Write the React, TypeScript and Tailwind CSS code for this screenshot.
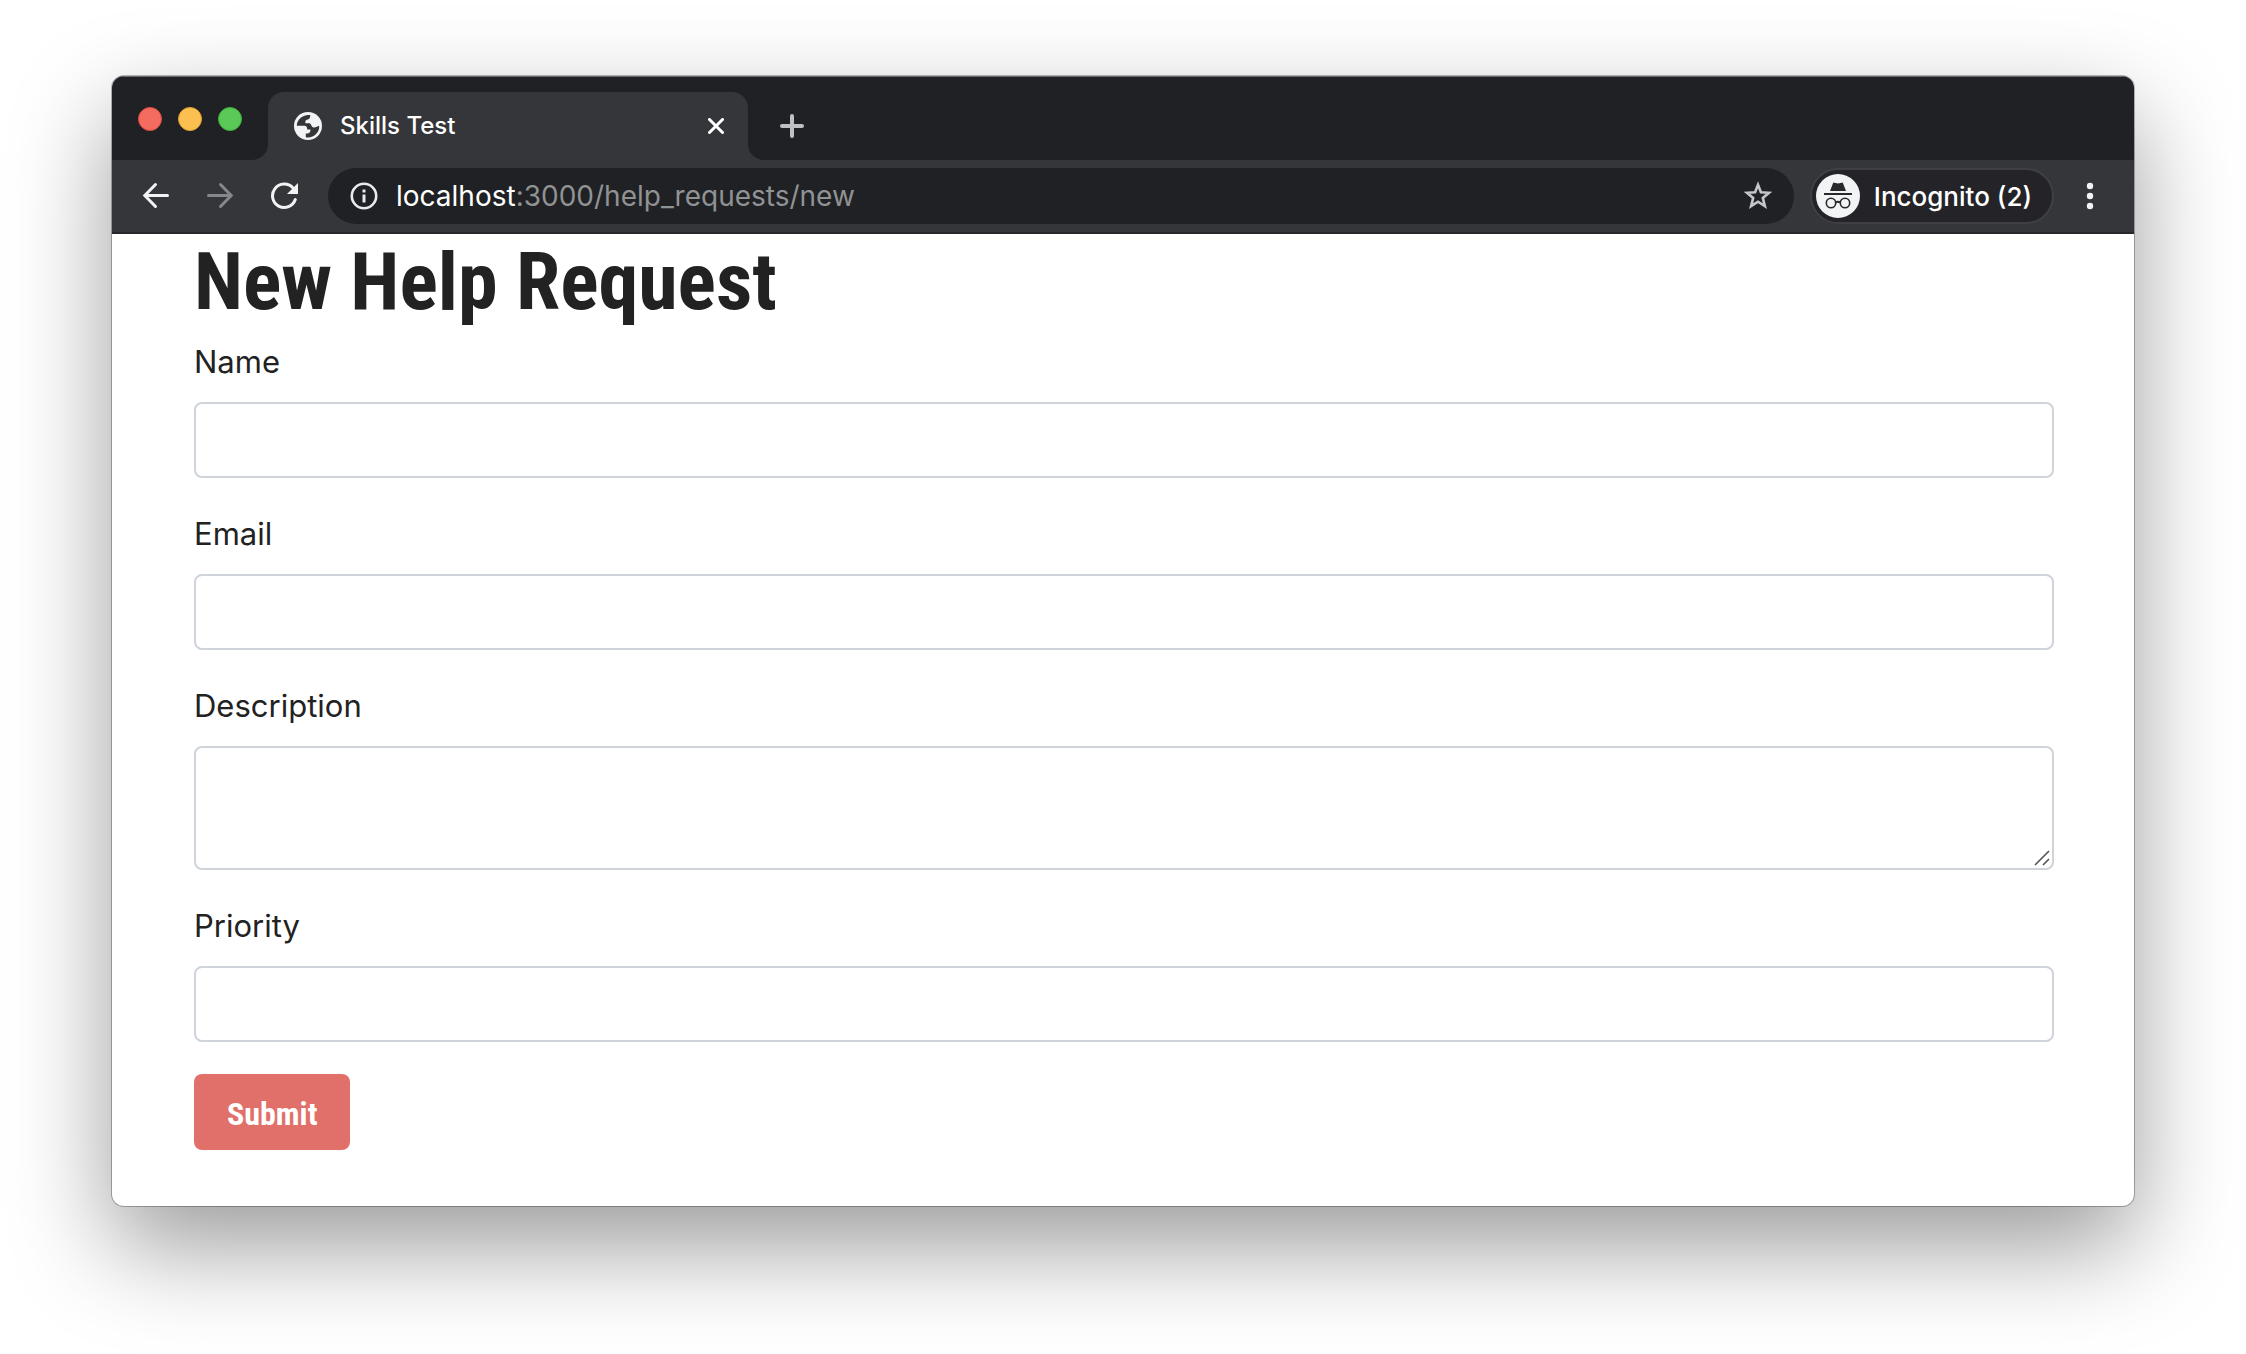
import type { ReactNode } from "react";

const condensed = "font-['Roboto_Condensed','Open_Sans_Condensed',sans-serif]";
const fieldClass =
  "block w-full rounded-lg border-2 border-[#ced4da] bg-white px-6 text-[31px] text-[#212529] outline-none focus:border-[#80bdff]";

function BackIcon() {
  return (
    <svg width="28" height="28" viewBox="0 0 28 28" fill="none" stroke="currentColor" strokeWidth="3" strokeLinecap="round" strokeLinejoin="miter">
      <path d="M13.5 2.5 2.8 13.5 13.5 24.5M3.5 13.5H25.5" />
    </svg>
  );
}

function ForwardIcon() {
  return (
    <svg width="28" height="28" viewBox="0 0 28 28" fill="none" stroke="currentColor" strokeWidth="3" strokeLinecap="round">
      <path d="M14.5 2.5 25.2 13.5 14.5 24.5M24.5 13.5H2.5" />
    </svg>
  );
}

function ReloadIcon() {
  return (
    <svg width="28" height="28" viewBox="0 0 28 28" fill="none">
      <path d="M25.3 17.6A11.7 11.7 0 1 1 22.8 5.8" stroke="currentColor" strokeWidth="3" strokeLinecap="round" />
      <path d="M28 1V12H17Z" fill="currentColor" />
    </svg>
  );
}

function GlobeIcon() {
  return (
    <svg width="28" height="28" viewBox="0 0 28 28">
      <circle cx="14" cy="14" r="14" fill="#f1f3f4" />
      <path
        d="M16.2 3C8.8 2 2.8 7.6 2.8 13.8H10.4C12.6 14 13.2 15.4 13.2 17.4H16.4C16.6 20 15.6 21.6 11.8 21.6V25.2C19 26.6 25.6 21 25.2 14 23.4 13.6 22.6 15.6 19.6 15.4 17.2 15.2 17.8 12.2 15.6 11.2H11.4C10.8 8.6 12 7.6 14.4 7.2 16 6.4 16.4 4.6 16.2 3Z"
        fill="#35363a"
      />
    </svg>
  );
}

function InfoIcon() {
  return (
    <svg width="28" height="28" viewBox="0 0 28 28" fill="none">
      <circle cx="14" cy="14" r="12.2" stroke="#e8eaed" strokeWidth="2.6" />
      <path d="M12.5 7.5h3v3h-3zM12.5 12.5h3v8h-3z" fill="#e8eaed" />
    </svg>
  );
}

function StarIcon() {
  return (
    <svg width="30" height="30" viewBox="0 0 30 30" fill="none">
      <path
        d="M15 3.8 17.9 11.2 26 11.8 19.8 16.9 21.9 25.2 15 20.7 8.1 25.2 10.2 16.9 4 11.8 12.1 11.2Z"
        stroke="#c4c6c9"
        strokeWidth="2.6"
      />
    </svg>
  );
}

function IncognitoIcon() {
  return (
    <svg width="44" height="44" viewBox="0 0 44 44" fill="none">
      <circle cx="22" cy="22" r="22" fill="#f1f3f4" />
      <path d="M14 17 17 9.2Q17.4 8.4 18.3 8.7L22 9.6 25.7 8.7Q26.6 8.4 27 9.2L30 17Z" fill="#28292d" />
      <path d="M8 19h28v2H8z" fill="#28292d" />
      <circle cx="15" cy="29" r="4.7" stroke="#28292d" strokeWidth="1.6" />
      <circle cx="29" cy="29" r="4.7" stroke="#28292d" strokeWidth="1.6" />
      <path d="M19.7 28.5Q22 27 24.3 28.5" stroke="#28292d" strokeWidth="1.8" />
    </svg>
  );
}

function MenuDots() {
  return (
    <svg width="8" height="28" viewBox="0 0 8 28" fill="#f1f3f4">
      <circle cx="4" cy="4" r="3.2" />
      <circle cx="4" cy="14" r="3.2" />
      <circle cx="4" cy="24" r="3.2" />
    </svg>
  );
}

function TabStrip() {
  return (
    <div className="flex h-[84px] items-end bg-[#202124] shadow-[inset_0_1px_0_#6a6b6e]">
      <div className="flex h-[84px] w-[156px] gap-4 pt-[31px] pl-[26px]">
        <button aria-label="Close window" className="size-6 rounded-full border border-[#e0483e] bg-[#f46b60]" />
        <button aria-label="Minimize window" className="size-6 rounded-full border border-[#dfa032] bg-[#fbc04f]" />
        <button aria-label="Zoom window" className="size-6 rounded-full border border-[#3bae3c] bg-[#5bc957]" />
      </div>
      <div className="relative flex h-[68px] w-[480px] items-center rounded-t-2xl bg-[#35363a] pr-6 pl-[26px]">
        <span className="absolute bottom-0 -left-4 size-4 bg-[#35363a]">
          <span className="block size-4 rounded-br-2xl bg-[#202124]" />
        </span>
        <span className="absolute -right-4 bottom-0 size-4 bg-[#35363a]">
          <span className="block size-4 rounded-bl-2xl bg-[#202124]" />
        </span>
        <GlobeIcon />
        <span className="ml-[18px] flex-1 text-[24px] font-medium text-white">Skills Test</span>
        <button aria-label="Close tab">
          <svg width="16" height="16" viewBox="0 0 16 16" stroke="#fff" strokeWidth="3" strokeLinecap="round">
            <path d="M1.5 1.5 14.5 14.5M14.5 1.5 1.5 14.5" />
          </svg>
        </button>
      </div>
      <button aria-label="New tab" className="flex h-[68px] items-center pl-8">
        <svg width="24" height="24" viewBox="0 0 24 24" stroke="#bdc1c6" strokeWidth="4" strokeLinecap="round">
          <path d="M12 2V22M2 12H22" />
        </svg>
      </button>
    </div>
  );
}

function Toolbar() {
  return (
    <div className="flex h-[74px] items-center border-b-2 border-[#28282c] bg-[#35363a] pr-10 pl-[30px]">
      <div className="flex items-center gap-9 text-[#f1f3f4]">
        <button aria-label="Back"><BackIcon /></button>
        <button aria-label="Forward" className="text-[#86878a]"><ForwardIcon /></button>
        <button aria-label="Reload"><ReloadIcon /></button>
      </div>
      <div className="ml-[30px] flex h-14 flex-1 items-center rounded-full bg-[#202124] pr-[21px] pl-[22px]">
        <InfoIcon />
        <div className="ml-[18px] flex-1 text-[28px] text-[#919294]">
          <span className="text-white">localhost</span>:3000/help_requests/new
        </div>
        <button aria-label="Bookmark this page"><StarIcon /></button>
      </div>
      <button className="ml-4 flex h-14 items-center rounded-full border-2 border-[#3f4045] bg-[#242428] pr-5 pl-1 text-[26px] font-medium text-white">
        <IncognitoIcon />
        <span className="ml-3.5">Incognito (2)</span>
      </button>
      <button aria-label="Menu" className="ml-8"><MenuDots /></button>
    </div>
  );
}

function Field({ id, label, children }: { id: string; label: string; children: ReactNode }) {
  return (
    <div className="mb-8">
      <label htmlFor={id} className="mb-4 block w-fit text-[31px] leading-[48px]">{label}</label>
      {children}
    </div>
  );
}

export default function App() {
  return (
    <div className="min-h-screen bg-white px-28 pt-[76px] pb-36 font-[Inter,sans-serif]">
      <div className="overflow-hidden rounded-xl bg-white shadow-[0_0_0_1px_rgba(0,0,0,0.28),0_40px_100px_rgba(0,0,0,0.4)]">
        <TabStrip />
        <Toolbar />
        <main className="pr-20 pb-14 pl-[82px] text-[#222]">
          <h1 className={`mb-2 text-[80px] leading-[96px] font-bold ${condensed}`}>New Help Request</h1>
          <form onSubmit={(e) => e.preventDefault()}>
            <Field id="name" label="Name">
              <input id="name" type="text" className={`h-[76px] ${fieldClass}`} />
            </Field>
            <Field id="email" label="Email">
              <input id="email" type="email" className={`h-[76px] ${fieldClass}`} />
            </Field>
            <Field id="description" label="Description">
              <div className="relative">
                <textarea id="description" className={`h-[124px] resize-none ${fieldClass}`} />
                <svg width="16" height="16" viewBox="0 0 16 16" className="pointer-events-none absolute right-1 bottom-1" stroke="#555" strokeWidth="1.6">
                  <path d="M1 15 15 1M9 15 15 9" />
                </svg>
              </div>
            </Field>
            <Field id="priority" label="Priority">
              <input id="priority" type="text" className={`h-[76px] ${fieldClass}`} />
            </Field>
            <button type="submit" className={`h-[76px] rounded-lg bg-[#e07069] px-[33px] pt-1 text-[32px] font-bold text-white ${condensed}`}>
              Submit
            </button>
          </form>
        </main>
      </div>
    </div>
  );
}
